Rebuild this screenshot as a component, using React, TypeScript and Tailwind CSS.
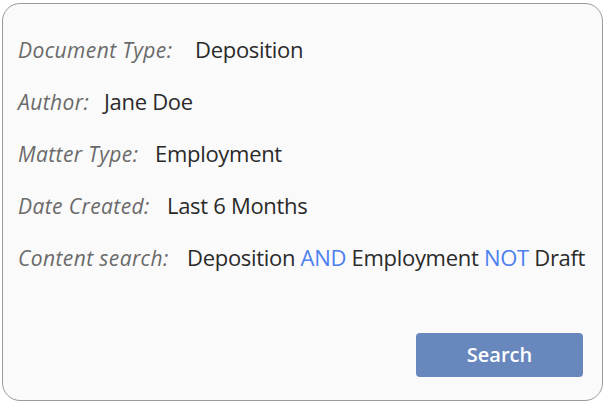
import React from 'react';

const rows: { label: string; value: React.ReactNode; w: string }[] = [
  { label: 'Document Type:', value: 'Deposition', w: 'w-[177px]' },
  { label: 'Author:', value: 'Jane Doe', w: 'w-[86px]' },
  { label: 'Matter Type:', value: 'Employment', w: 'w-[137px]' },
  { label: 'Date Created:', value: 'Last 6 Months', w: 'w-[149px]' },
  {
    label: 'Content search:',
    value: (
      <>
        Deposition <span className="text-[#4d7ff0]">AND</span> Employment{' '}
        <span className="text-[#4d7ff0]">NOT</span> Draft
      </>
    ),
    w: 'w-[169px]',
  },
];

export default function App() {
  return (
    <div className="w-[605px] h-[405px] bg-white p-[2px] pt-[3px]">
      <div
        className="w-[601px] h-[398px] rounded-[18px] border border-[#9a9a9a] bg-[#fafafa] flex flex-col pl-[15px] pr-[16px] pt-[33px] pb-[23px]"
        style={{ fontFamily: '"Open Sans", sans-serif' }}
      >
        <div className="flex flex-col gap-[28px]">
          {rows.map((r) => (
            <div key={r.label} className="flex items-baseline h-[24px] leading-[24px] whitespace-nowrap">
              <span className={`${r.w} shrink-0 italic text-[#6a6a6a] text-[21px] tracking-[0.4px]`}>{r.label}</span>
              <span className="text-[#2a2a2a] text-[22px] tracking-[-0.3px]">{r.value}</span>
            </div>
          ))}
        </div>
        <div className="mt-auto flex justify-end pr-[3px]">
          <button className="w-[167px] h-[44px] rounded-[4px] bg-[#6887bd] text-white text-[20px] font-semibold">
            Search
          </button>
        </div>
      </div>
    </div>
  );
}
